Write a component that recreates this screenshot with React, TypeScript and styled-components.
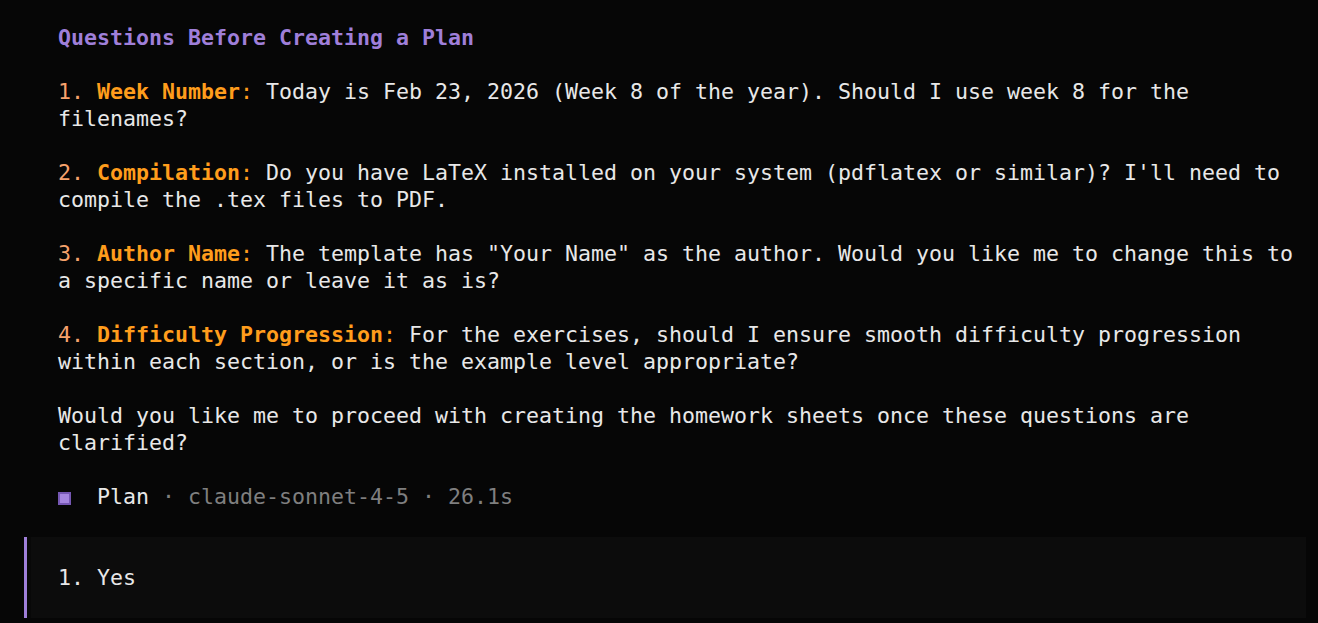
import React from "react";
import styled, { createGlobalStyle } from "styled-components";

const GlobalStyle = createGlobalStyle`
  html, body {
    margin: 0;
    padding: 0;
    background: #060606;
  }
  body {
    font-family: "DejaVu Sans Mono", "Liberation Mono", monospace;
    font-size: 21.6px;
    color: #e8e8e8;
  }
`;

const Screen = styled.div`
  width: 1318px;
  height: 623px;
  overflow: hidden;
  box-sizing: border-box;
  padding-top: 24px;
  background: #060606;
`;

const Transcript = styled.div`
  padding-left: 58px;
`;

const Row = styled.div`
  height: 27px;
  line-height: 27px;
  white-space: pre;
`;

const Title = styled.span`
  color: #9f7fd9;
  font-weight: bold;
`;

const Num = styled.span`
  color: #f6a26c;
`;

const Label = styled.span`
  color: #ff9d1c;
  font-weight: bold;
`;

const Colon = styled.span`
  color: #ff9d1c;
`;

const Muted = styled.span`
  color: #7f7f7f;
`;

const Marker = styled.span`
  display: inline-block;
  box-sizing: border-box;
  width: 13px;
  height: 13px;
  vertical-align: middle;
  border: 2px solid #7557b3;
  background: #a586df;
`;

const InputBox = styled.div`
  display: flex;
  margin: 0 12px 0 24px;
  height: 81px;
`;

const InputBar = styled.div`
  width: 3px;
  background: #9f7fd9;
`;

const InputGap = styled.div`
  width: 4px;
  background: #080808;
`;

const InputBody = styled.div`
  flex: 1;
  background: #0c0c0c;
  padding: 27px 0 0 27px;
`;

type Question = {
  n: string;
  label: string;
  lines: string[];
};

const questions: Question[] = [
  {
    n: "1.",
    label: "Week Number",
    lines: [
      " Today is Feb 23, 2026 (Week 8 of the year). Should I use week 8 for the",
      "filenames?",
    ],
  },
  {
    n: "2.",
    label: "Compilation",
    lines: [
      " Do you have LaTeX installed on your system (pdflatex or similar)? I'll need to",
      "compile the .tex files to PDF.",
    ],
  },
  {
    n: "3.",
    label: "Author Name",
    lines: [
      ' The template has "Your Name" as the author. Would you like me to change this to',
      "a specific name or leave it as is?",
    ],
  },
  {
    n: "4.",
    label: "Difficulty Progression",
    lines: [
      " For the exercises, should I ensure smooth difficulty progression",
      "within each section, or is the example level appropriate?",
    ],
  },
];

export default function App() {
  return (
    <>
      <GlobalStyle />
      <Screen>
        <Transcript>
          <Row>
            <Title>Questions Before Creating a Plan</Title>
          </Row>
          <Row />
          {questions.map((q) => (
            <React.Fragment key={q.n}>
              <Row>
                <Num>{q.n} </Num>
                <Label>{q.label}</Label>
                <Colon>:</Colon>
                {q.lines[0]}
              </Row>
              <Row>{q.lines[1]}</Row>
              <Row />
            </React.Fragment>
          ))}
          <Row>
            Would you like me to proceed with creating the homework sheets once these questions are
          </Row>
          <Row>clarified?</Row>
          <Row />
          <Row>
            <Marker />
            {"  Plan"}
            <Muted> · claude-sonnet-4-5 · 26.1s</Muted>
          </Row>
          <Row />
        </Transcript>
        <InputBox>
          <InputBar />
          <InputGap />
          <InputBody>
            <Row>1. Yes</Row>
          </InputBody>
        </InputBox>
      </Screen>
    </>
  );
}
